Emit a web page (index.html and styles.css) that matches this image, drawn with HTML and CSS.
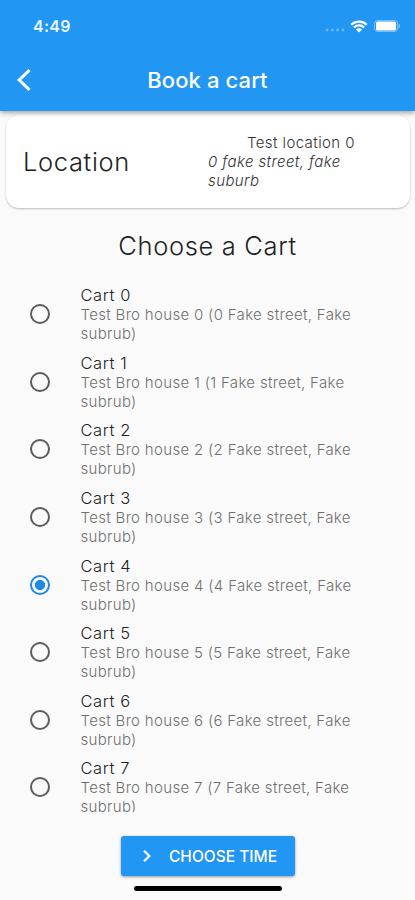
FILE: index.html
```
<!DOCTYPE html>
<html lang="en">
<head>
<meta charset="utf-8">
<title>Book a cart</title>
<link rel="stylesheet" href="styles.css">
</head>
<body>
<header class="header">
  <div class="status">
    <span class="clock">4:49</span>
    <div class="status-icons">
      <svg class="signal" width="20" height="4" viewBox="0 0 20 4"><circle cx="2" cy="2" r="1.4"/><circle cx="7.3" cy="2" r="1.4"/><circle cx="12.6" cy="2" r="1.4"/><circle cx="17.9" cy="2" r="1.4"/></svg>
      <svg class="wifi" width="18" height="13" viewBox="0 0 18 13"><path d="M1.2 4.7a11.3 11.3 0 0 1 15.6 0M3.9 7.5a7.4 7.4 0 0 1 10.2 0"/><path class="dot" d="M9 12.6 5.9 9.6a4.5 4.5 0 0 1 6.2 0z"/></svg>
      <svg class="battery" width="27" height="12" viewBox="0 0 27 12"><rect class="shell" x=".5" y=".5" width="23" height="11" rx="3"/><rect x="2" y="1.5" width="20" height="9" rx="1.5"/><path class="cap" d="M24.7 3.5q3 2.5 0 5z"/></svg>
    </div>
  </div>
  <div class="toolbar">
    <svg class="back" width="16" height="24" viewBox="0 0 16 24"><path d="M13.5 2.2 3.2 12l10.3 9.8"/></svg>
    <h1>Book a cart</h1>
  </div>
</header>
<section class="card">
  <h2>Location</h2>
  <div class="place"><div class="name">Test location 0</div><div class="address">0 fake street, fake<br>suburb</div></div>
</section>
<h2 class="heading">Choose a Cart</h2>
<main class="list">
  <div class="row"><i class="radio"></i><div><div class="title">Cart 0</div><div class="sub">Test Bro house 0 (0 Fake street, Fake<br>subrub)</div></div></div>
  <div class="row"><i class="radio"></i><div><div class="title">Cart 1</div><div class="sub">Test Bro house 1 (1 Fake street, Fake<br>subrub)</div></div></div>
  <div class="row"><i class="radio"></i><div><div class="title">Cart 2</div><div class="sub">Test Bro house 2 (2 Fake street, Fake<br>subrub)</div></div></div>
  <div class="row"><i class="radio"></i><div><div class="title">Cart 3</div><div class="sub">Test Bro house 3 (3 Fake street, Fake<br>subrub)</div></div></div>
  <div class="row"><i class="radio selected"></i><div><div class="title">Cart 4</div><div class="sub">Test Bro house 4 (4 Fake street, Fake<br>subrub)</div></div></div>
  <div class="row"><i class="radio"></i><div><div class="title">Cart 5</div><div class="sub">Test Bro house 5 (5 Fake street, Fake<br>subrub)</div></div></div>
  <div class="row"><i class="radio"></i><div><div class="title">Cart 6</div><div class="sub">Test Bro house 6 (6 Fake street, Fake<br>subrub)</div></div></div>
  <div class="row"><i class="radio"></i><div><div class="title">Cart 7</div><div class="sub">Test Bro house 7 (7 Fake street, Fake<br>subrub)</div></div></div>
</main>
<footer class="footer">
  <button class="choose"><svg width="10" height="14" viewBox="0 0 10 14"><path d="m2 1.7 5.3 5.3L2 12.3"/></svg><span>CHOOSE TIME</span></button>
  <div class="home"></div>
</footer>
</body>
</html>
```
FILE: styles.css
```
* { box-sizing: border-box; }
body {
  margin: 0;
  height: 900px;
  overflow: hidden;
  display: flex;
  flex-direction: column;
  background: #fafafa;
  color: #222;
  font-family: Inter, "Liberation Sans", sans-serif;
}
h1, h2 { margin: 0; font-weight: 400; }
svg { display: block; fill: none; }
.header {
  flex: none;
  position: relative;
  height: 111px;
  background: #2196f3;
  color: #fff;
  box-shadow: 0 2px 5px rgba(0, 0, 0, .35);
}
.status {
  height: 50px;
  padding: 2px 15px 0 33px;
  display: flex;
  align-items: center;
  justify-content: space-between;
}
.clock { font-size: 16px; font-weight: 600; letter-spacing: .3px; opacity: .9; }
.status-icons { display: flex; align-items: center; }
.signal { fill: #fff; opacity: .35; margin: 8px 5px 0 0; }
.wifi { stroke: #fff; stroke-width: 2.2; margin-right: 6px; }
.wifi .dot { fill: #fff; stroke: none; }
.battery { fill: #fff; margin-right: -1px; }
.battery .shell { fill: none; stroke: #fff; opacity: .4; }
.battery .cap { opacity: .5; }
.toolbar {
  height: 60px;
  display: grid;
  grid-template-columns: 60px 1fr 60px;
  align-items: center;
}
.back { margin-left: 16px; stroke: #fff; stroke-width: 3; }
.toolbar h1 { text-align: center; font-size: 22px; font-weight: 500; letter-spacing: .1px; }
.card {
  flex: none;
  height: 93px;
  margin: 4px 5px 0 6px;
  padding-left: 17px;
  display: grid;
  grid-template-columns: 185px 1fr;
  align-items: center;
  background: #fff;
  border-radius: 13px;
  box-shadow: 0 1px 2px rgba(0, 0, 0, .25);
}
.card h2 { font-size: 25.5px; letter-spacing: .65px; font-weight: 300; }
.place { font-size: 15px; line-height: 19px; color: #333; font-weight: 300; }
.name { padding-left: 39px; letter-spacing: .4px; }
.address { font-style: italic; letter-spacing: .4px; }
.heading {
  flex: none;
  height: 73px;
  line-height: 76px;
  text-align: center;
  font-size: 25.5px;
  font-weight: 300;
  letter-spacing: .65px;
}
.list { flex: none; height: 531px; overflow: hidden; }
.row {
  height: 67.57px;
  display: grid;
  grid-template-columns: 50.5px 1fr;
  align-items: center;
  padding-left: 30px;
}
.radio {
  width: 20px;
  height: 20px;
  margin-top: -1px;
  border: 2px solid #5c5c5c;
  border-radius: 50%;
}
.radio.selected { border-color: #1e88e5; background: radial-gradient(circle, #1e88e5 4.7px, transparent 5.4px); }
.title { font-size: 16.5px; line-height: 19px; font-weight: 300; letter-spacing: .6px; }
.sub { font-size: 15px; line-height: 19px; color: #707070; font-weight: 300; letter-spacing: .32px; }
.footer {
  display: flex;
  flex-direction: column;
  align-items: center;
  padding-top: 24px;
}
.choose {
  width: 174px;
  height: 40px;
  margin-right: -1px;
  padding: 0 0 0 21px;
  display: flex;
  align-items: center;
  gap: 17px;
  border: 0;
  border-radius: 3px;
  background: #2196f3;
  color: #fff;
  font: 500 15.5px Inter, "Liberation Sans", sans-serif;
  white-space: nowrap;
  box-shadow: 0 1px 3px rgba(0, 0, 0, .4);
}
.choose svg { stroke: #fff; stroke-width: 2.2; }
.home { width: 148px; height: 5px; margin-top: 10px; border-radius: 3px; background: #000; }
```
